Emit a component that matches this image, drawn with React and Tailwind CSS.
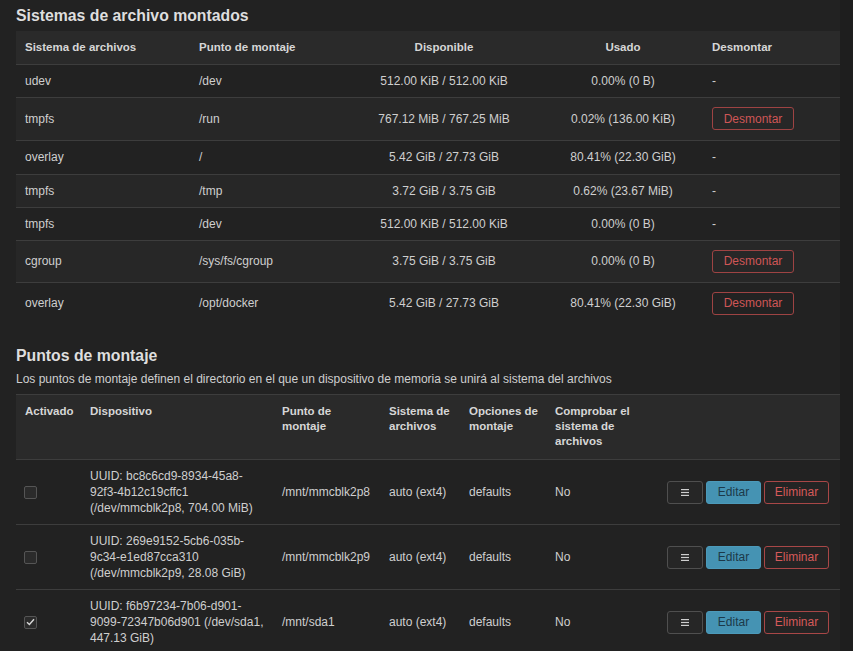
import React from "react";

const FONT = { fontFamily: '"Liberation Sans", Arial, Helvetica, sans-serif' };

const fsRows = [
  ["udev", "/dev", "512.00 KiB / 512.00 KiB", "0.00% (0 B)", false, "h-[33px]"],
  ["tmpfs", "/run", "767.12 MiB / 767.25 MiB", "0.02% (136.00 KiB)", true, "h-[43px]"],
  ["overlay", "/", "5.42 GiB / 27.73 GiB", "80.41% (22.30 GiB)", false, "h-[34px]"],
  ["tmpfs", "/tmp", "3.72 GiB / 3.75 GiB", "0.62% (23.67 MiB)", false, "h-[33px]"],
  ["tmpfs", "/dev", "512.00 KiB / 512.00 KiB", "0.00% (0 B)", false, "h-[33px]"],
  ["cgroup", "/sys/fs/cgroup", "3.75 GiB / 3.75 GiB", "0.00% (0 B)", true, "h-[42px]"],
  ["overlay", "/opt/docker", "5.42 GiB / 27.73 GiB", "80.41% (22.30 GiB)", true, "h-[42px]"],
];

const mounts = [
  {
    checked: false,
    dev: ["UUID: bc8c6cd9-8934-45a8-", "92f3-4b12c19cffc1", "(/dev/mmcblk2p8, 704.00 MiB)"],
    mp: "/mnt/mmcblk2p8",
  },
  {
    checked: false,
    dev: ["UUID: 269e9152-5cb6-035b-", "9c34-e1ed87cca310", "(/dev/mmcblk2p9, 28.08 GiB)"],
    mp: "/mnt/mmcblk2p9",
  },
  {
    checked: true,
    dev: ["UUID: f6b97234-7b06-d901-", "9099-72347b06d901 (/dev/sda1,", "447.13 GiB)"],
    mp: "/mnt/sda1",
  },
];

function Checkbox({ checked }) {
  return (
    <div className="w-[13px] h-[13px] border border-[#555] bg-[#2b2b2b] rounded-[2px] flex items-center justify-center">
      {checked && (
        <svg width="9" height="8" viewBox="0 0 9 8" fill="none">
          <path d="M1 4.2 L3.4 6.4 L8 1.2" stroke="#d8d8d8" strokeWidth="1.4" />
        </svg>
      )}
    </div>
  );
}

export default function App() {
  return (
    <div className="flex min-h-[651px] w-[853px] bg-[#222222] text-[#cfcfcf] overflow-hidden" style={FONT}>
      <div className="w-[840px] pl-[16px] pt-[6px]">
        <h2 className="text-[15.8px] leading-[20px] font-bold text-[#dedede]">Sistemas de archivo montados</h2>
        <table className="mt-[5px] w-[824px] table-fixed border-collapse text-[12px]">
          <colgroup>
            <col className="w-[174px]" />
            <col className="w-[155px]" />
            <col className="w-[198px]" />
            <col className="w-[160px]" />
            <col className="w-[137px]" />
          </colgroup>
          <thead>
            <tr className="h-[33px] bg-[#2a2a2a] border-b border-[#3d3d3d] text-[11.5px] font-bold text-[#d6d6d6]">
              <th className="text-left font-bold pl-[9px]">Sistema de archivos</th>
              <th className="text-left font-bold pl-[9px]">Punto de montaje</th>
              <th className="text-center font-bold">Disponible</th>
              <th className="text-center font-bold">Usado</th>
              <th className="text-left font-bold pl-[9px]">Desmontar</th>
            </tr>
          </thead>
          <tbody>
            {fsRows.map((r, i) => (
              <tr
                key={i}
                className={`${r[5]} ${i % 2 === 1 ? "bg-[#272727]" : "bg-[#222222]"} ${i < fsRows.length - 1 ? "border-b border-[#3d3d3d]" : ""}`}
              >
                <td className="pl-[9px]">{r[0]}</td>
                <td className="pl-[9px]">{r[1]}</td>
                <td className="text-center">{r[2]}</td>
                <td className="text-center">{r[3]}</td>
                <td className="pl-[9px]">
                  {r[4] ? (
                    <button className="w-[82px] h-[23px] border border-[#9e4343] rounded-[3px] text-[#cf5656] text-[12px] bg-transparent">
                      Desmontar
                    </button>
                  ) : (
                    "-"
                  )}
                </td>
              </tr>
            ))}
          </tbody>
        </table>

        <h2 className="mt-[22px] text-[15.8px] leading-[20px] font-bold text-[#dedede]">Puntos de montaje</h2>
        <p className="mt-[6px] text-[12px] leading-[15px] text-[#cfcfcf]">
          Los puntos de montaje definen el directorio en el que un dispositivo de memoria se unirá al sistema del archivos
        </p>
        <table className="mt-[7px] w-[824px] table-fixed border-collapse text-[12px]">
          <colgroup>
            <col className="w-[65px]" />
            <col className="w-[192px]" />
            <col className="w-[107px]" />
            <col className="w-[80px]" />
            <col className="w-[86px]" />
            <col className="w-[104px]" />
            <col className="w-[190px]" />
          </colgroup>
          <thead>
            <tr className="h-[65px] bg-[#2a2a2a] border-t border-b border-[#3d3d3d] text-[11.5px] leading-[15px] font-bold text-[#d6d6d6] align-top">
              <th className="text-left font-bold pl-[9px] pt-[9px]">Activado</th>
              <th className="text-left font-bold pl-[9px] pt-[9px]">Dispositivo</th>
              <th className="text-left font-bold pl-[9px] pt-[9px]">Punto de<br />montaje</th>
              <th className="text-left font-bold pl-[9px] pt-[9px]">Sistema de<br />archivos</th>
              <th className="text-left font-bold pl-[9px] pt-[9px]">Opciones de<br />montaje</th>
              <th className="text-left font-bold pl-[9px] pt-[9px]">Comprobar el<br />sistema de<br />archivos</th>
              <th></th>
            </tr>
          </thead>
          <tbody>
            {mounts.map((m, i) => (
              <tr key={i} className="h-[65px] border-b border-[#3d3d3d] bg-[#222222]">
                <td className="pl-[8px]">
                  <Checkbox checked={m.checked} />
                </td>
                <td className="pl-[9px] leading-[16px]">
                  {m.dev[0]}
                  <br />
                  {m.dev[1]}
                  <br />
                  {m.dev[2]}
                </td>
                <td className="pl-[9px]">{m.mp}</td>
                <td className="pl-[9px]">auto (ext4)</td>
                <td className="pl-[9px]">defaults</td>
                <td className="pl-[9px]">No</td>
                <td className="pr-[11px]">
                  <div className="flex justify-end gap-[3px]">
                    <button className="w-[36px] h-[23px] border border-[#4f4f4f] rounded-[3px] bg-[#262626] flex items-center justify-center">
                      <svg width="8" height="7" viewBox="0 0 8 7">
                        <rect x="0" y="0" width="8" height="1.2" fill="#cfcfcf" />
                        <rect x="0" y="2.9" width="8" height="1.2" fill="#cfcfcf" />
                        <rect x="0" y="5.8" width="8" height="1.2" fill="#cfcfcf" />
                      </svg>
                    </button>
                    <button className="w-[55px] h-[23px] rounded-[3px] bg-[#4593b3] border border-[#4c9aba] text-[#1c3949] text-[12px]">
                      Editar
                    </button>
                    <button className="w-[65px] h-[23px] rounded-[3px] border border-[#a84747] bg-[#242424] text-[#d65a5a] text-[12px]">
                      Eliminar
                    </button>
                  </div>
                </td>
              </tr>
            ))}
          </tbody>
        </table>
      </div>
      <div className="w-[13px] bg-[#1e1e1e]" />
    </div>
  );
}
